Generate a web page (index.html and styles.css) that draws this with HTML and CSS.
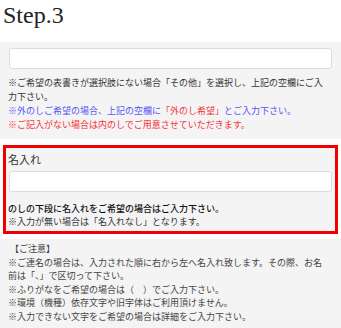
FILE: index.html
```html
<!DOCTYPE html>
<html lang="ja">

<head>
    <meta charset="UTF-8">
    <meta name="viewport" content="width=device-width, initial-scale=1.0">
    <title>Step.3</title>
    <link rel="stylesheet" href="styles.css">
</head>

<body>
    <h1 class="step-title">Step.3</h1>

    <div class="form-block">
        <input type="text" class="text-input">
        <p class="note">※ご希望の表書きが選択肢にない場合「その他」を選択し、上記の空欄にご入力下さい。</p>
        <p class="note note-blue">※外のしご希望の場合、上記の空欄に<span class="note-red">「外のし希望」</span>とご入力下さい。</p>
        <p class="note note-red">※ご記入がない場合は内のしでご用意させていただきます。</p>
    </div>

    <div class="form-block name-block">
        <label class="field-label">名入れ</label>
        <input type="text" class="text-input">
        <p class="note note-strong">のしの下段に名入れをご希望の場合はご入力下さい。</p>
        <p class="note">※入力が無い場合は「名入れなし」となります。</p>
    </div>

    <div class="form-block caution-block">
        <p class="note caution-title">【ご注意】</p>
        <p class="note">※ご連名の場合は、入力された順に右から左へ名入れ致します。その際、お名前は「、」で区切って下さい。</p>
        <p class="note">※ふりがなをご希望の場合は（　）でご入力下さい。</p>
        <p class="note">※環境（機種）依存文字や旧字体はご利用頂けません。</p>
        <p class="note">※入力できない文字をご希望の場合は詳細をご入力下さい。</p>
    </div>
</body>

</html>
```

FILE: styles.css
```css
/* Reset styles */
* {
    margin: 0;
    padding: 0;
    box-sizing: border-box;
}

body {
    background-color: #fff;
    color: #333;
    font-family: "Noto Sans CJK JP", "Noto Sans", sans-serif;
    width: 341px;
}

/* Heading */
.step-title {
    font-family: "Liberation Serif", serif;
    font-size: 24px;
    font-weight: normal;
    line-height: 30px;
    color: #222;
    padding-left: 3px;
    margin-bottom: 12px;
}

/* Form blocks */
.form-block {
    background-color: #f4f4f4;
    padding: 6px 13px 7px 8px;
    margin-bottom: 6px;
}

.text-input {
    display: block;
    width: 323px;
    height: 21px;
    margin-left: 1px;
    margin-bottom: 7px;
    background-color: #fff;
    border: 1px solid #dcdcdc;
    border-radius: 3px;
}

.note {
    font-size: 9px;
    line-height: 14px;
    color: #333;
}

.note-blue {
    color: #5a55f5;
}

.note-red {
    color: #f5333a;
}

/* Name block with red frame */
.name-block {
    margin: 0 3px 5px;
    border: 3px solid #f20000;
    padding: 3px 3px 3px 2px;
}

.name-block .text-input {
    height: 21px;
    margin-top: 4px;
    margin-bottom: 10px;
}

.name-block .note {
    line-height: 13px;
}

.field-label {
    display: block;
    font-size: 11px;
    line-height: 16px;
    color: #333;
}

.note-strong {
    color: #111;
    font-weight: 500;
}

/* Caution list */
.caution-block {
    padding-top: 3px;
    padding-bottom: 6px;
    margin-bottom: 0;
}

.caution-block .note {
    line-height: 13.5px;
    color: #444;
}

.caution-title {
    padding-left: 2px;
}
```
